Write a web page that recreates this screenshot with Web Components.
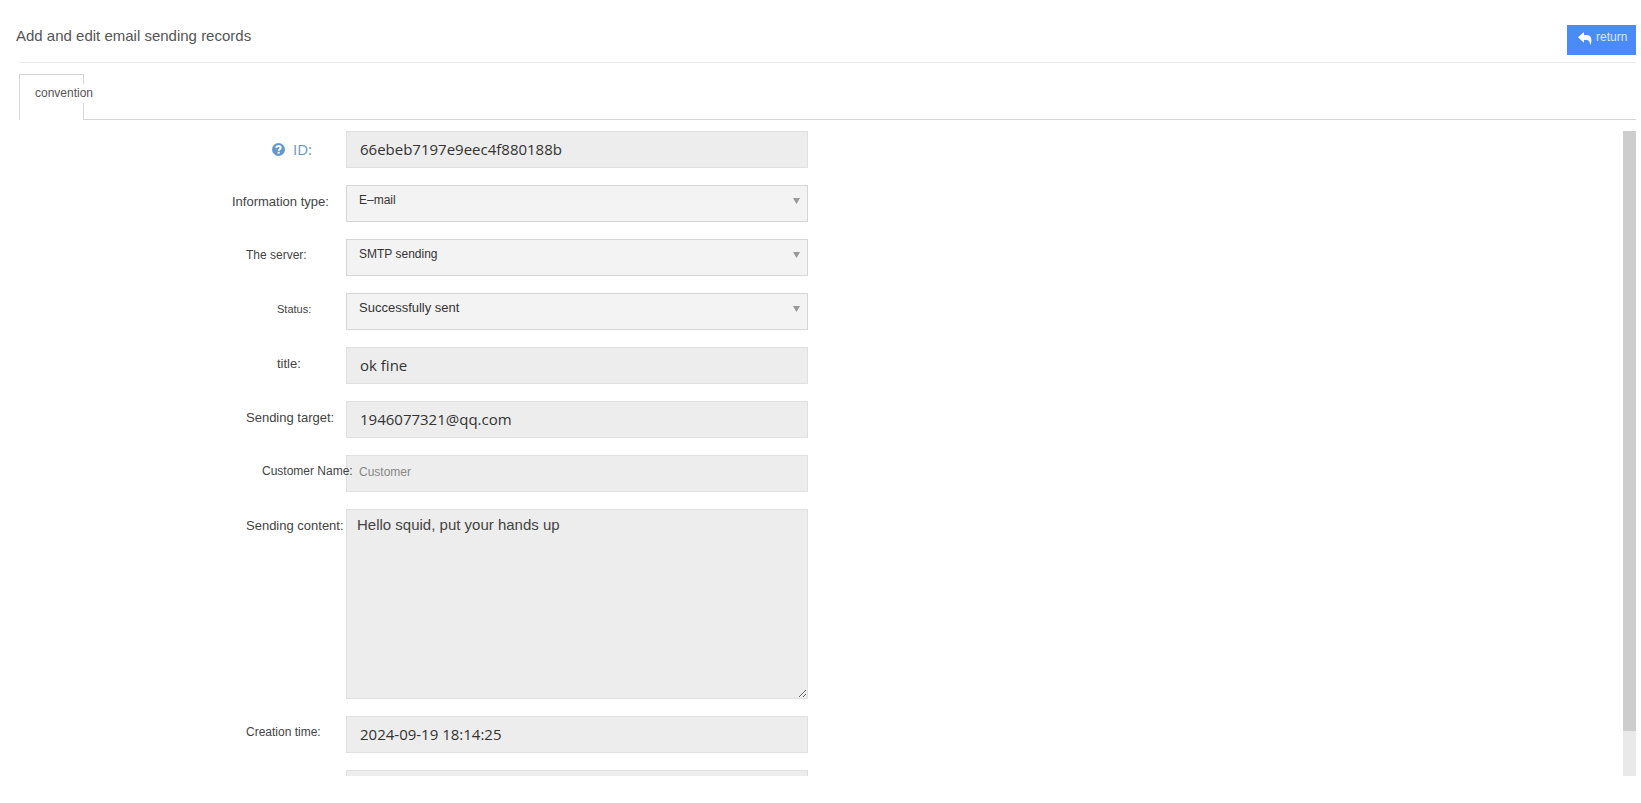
<!DOCTYPE html>
<html lang="en">
<head>
    <meta charset="UTF-8">
    <meta name="viewport" content="width=device-width, initial-scale=1.0">
    <title>Add and edit email sending records</title>
    <style>
        body {
            margin: 0;
            background: #fff;
            color: #444;
            font-family: "Liberation Sans", Arial, sans-serif;
        }
    </style>
</head>
<body>
    <template id="page-tmpl">
        <style>
            :host {
                display: flex;
                flex-direction: column;
                box-sizing: border-box;
                height: 100vh;
                padding: 0 5px 27px 16px;
            }

            header {
                display: flex;
                justify-content: space-between;
                align-items: center;
                height: 62px;
                box-sizing: border-box;
                padding-top: 18px;
            }

            h1 {
                margin: 0;
                padding-bottom: 8px;
                font-size: 15px;
                font-weight: normal;
                line-height: 20px;
                color: #555;
            }

            main {
                display: flex;
                flex-direction: column;
                flex: 1;
                min-height: 0;
                margin-left: 3px;
                border-top: 1px solid #eaebed;
                padding-top: 11px;
            }
        </style>
        <header>
            <h1><slot name="title"></slot></h1>
            <slot name="action"></slot>
        </header>
        <main>
            <slot></slot>
        </main>
    </template>

    <template id="return-tmpl">
        <style>
            :host {
                display: block;
            }

            button {
                display: flex;
                gap: 4px;
                width: 69px;
                height: 30px;
                border: 0;
                padding: 4px 0 0 11px;
                background: #4a8bf7;
                color: #dbe8ff;
                font: 12px/16px "Liberation Sans", Arial, sans-serif;
            }

            svg {
                margin-top: 3px;
                fill: #fff;
            }
        </style>
        <button type="button">
            <svg width="14" height="13" viewBox="0 0 14 13" aria-hidden="true">
                <path d="M0 5.300 5.400.4Q6 0 6 .7V3h2.300c3.300 0 5.100 1.700 5.100 5 0 1.600-.3 3-.9 4.400-.2.400-.5.300-.5-.1-.1-2.700-1.200-4.200-3.700-4.200H6V10q0 .7-.6.300Z"/>
            </svg>
            <slot></slot>
        </button>
    </template>

    <template id="tabs-tmpl">
        <style>
            :host {
                display: block;
                border-bottom: 1px solid #d5d5d5;
            }

            button {
                display: block;
                width: 65px;
                height: 46px;
                margin-bottom: -1px;
                border: 1px solid #d5d5d5;
                border-bottom: 0;
                padding: 0 0 8px 15px;
                background: #fff;
                color: #555;
                font: 12px/19px "Liberation Sans", Arial, sans-serif;
                text-align: left;
                white-space: nowrap;
            }

            /* the caption may run over the tab's right border */
            span {
                display: inline-block;
                background: #fff;
            }
        </style>
        <button type="button" role="tab" aria-selected="true"><span><slot></slot></span></button>
    </template>

    <template id="form-tmpl">
        <style>
            :host {
                display: flex;
                flex: 1;
                min-height: 0;
                margin-top: 11px;
            }

            form {
                display: grid;
                align-content: start;
                flex: 1;
                gap: 17px;
                padding-bottom: 17px;
                overflow-y: auto;
                scrollbar-width: none;
            }

            .track {
                display: flex;
                flex-direction: column;
                width: 13px;
                background: #e9e9e9;
            }

            .thumb {
                flex: 0 0 93%;
                background: #cdcdcd;
            }
        </style>
        <form><slot></slot></form>
        <div class="track"><div class="thumb"></div></div>
    </template>

    <script>
        const cloneInto = (host, tmpl) => {
            host.attachShadow({ mode: 'open' });
            host.shadowRoot.append(tmpl.content.cloneNode(true));
        };

        const byId = id => document.getElementById(id);

        customElements.define('record-page', class extends HTMLElement {
            connectedCallback() {
                cloneInto(this, byId('page-tmpl'));
            }
        });

        customElements.define('return-button', class extends HTMLElement {
            connectedCallback() {
                cloneInto(this, byId('return-tmpl'));
            }
        });

        customElements.define('tab-bar', class extends HTMLElement {
            connectedCallback() {
                cloneInto(this, byId('tabs-tmpl'));
            }
        });

        customElements.define('record-form', class extends HTMLElement {
            connectedCallback() {
                cloneInto(this, byId('form-tmpl'));
                const form = this.shadowRoot.querySelector('form');
                const thumb = this.shadowRoot.querySelector('.thumb');
                form.addEventListener('scroll', () => {
                    thumb.style.marginTop = `${Math.round(form.scrollTop * form.clientHeight / form.scrollHeight)}px`;
                });
            }
        });

        customElements.define('form-row', class extends HTMLElement {
            // attributes: kind (text | select | area), label, value, span, size
            control() {
                const value = this.getAttribute('value') || '';
                const hint = this.getAttribute('placeholder') || '';
                switch (this.getAttribute('kind')) {
                    case 'select':
                        return `<select id="field"><option>${value}</option></select>`;
                    case 'area':
                        return `<textarea id="field" readonly>${value}</textarea>`;
                    default:
                        return `<input id="field" type="text" value="${value}" placeholder="${hint}" readonly>`;
                }
            }

            connectedCallback() {
                this.attachShadow({ mode: 'open' });
                const label = this.getAttribute('label');
                this.shadowRoot.innerHTML = `
                    <style>
                        :host {
                            --label: 82px;
                            --label-size: 13px;
                            --text-size: 13px;
                            display: grid;
                            grid-template-columns: 309px minmax(0, 462px);
                            column-gap: 18px;
                            align-items: start;
                        }

                        :host([span="5"]) { --label: 96px; }
                        :host([span="3"]) { --label: 66px; }
                        :host([span="2"]) { --label: 51px; }
                        :host([size="small"]) { --label-size: 12px; }
                        :host([size="tiny"]) { --label-size: 11px; }
                        :host([text="small"]) { --text-size: 12px; }

                        label {
                            grid-column: 1;
                            z-index: 1;
                            justify-self: end;
                            width: var(--label);
                            font-size: var(--label-size);
                            line-height: 33px;
                            white-space: nowrap;
                        }

                        :host([help]) label {
                            display: flex;
                            align-items: center;
                            gap: 8px;
                            width: 56px;
                            color: #6498c8;
                            font-family: "Open Sans", sans-serif;
                            font-size: 15px;
                            line-height: 37px;
                        }

                        input, select, textarea {
                            grid-column: 2;
                            display: block;
                            box-sizing: border-box;
                            width: 100%;
                            height: 37px;
                            margin: 0;
                            border: 1px solid #e0e0e0;
                            border-radius: 0;
                            padding: 0 13px 2px;
                            background-color: #ededed;
                            color: #333;
                            font-family: "Open Sans", sans-serif;
                            font-size: 15px;
                            outline: 0;
                        }

                        input::placeholder {
                            color: #888;
                            font-family: "Liberation Sans", Arial, sans-serif;
                            font-size: 12px;
                        }

                        :host([placeholder]) input {
                            padding: 0 12px 8px;
                        }

                        select {
                            appearance: none;
                            border-color: #d6d6d6;
                            padding: 0 12px 8px;
                            background: #f3f3f3;
                            font-family: "Liberation Sans", Arial, sans-serif;
                            font-size: var(--text-size);
                        }

                        .arrow {
                            grid-area: 1 / 2;
                            z-index: 1;
                            justify-self: end;
                            margin: 13px 8px 0 0;
                            pointer-events: none;
                        }

                        select, .arrow { grid-row: 1; }

                        textarea {
                            height: 190px;
                            padding: 5px 10px;
                            color: #444;
                            font: 15px/20px "Liberation Sans", Arial, sans-serif;
                            resize: both;
                        }
                    </style>
                    ${label ? `<label for="field">${this.hasAttribute('help') ? `
                        <svg width="13" height="13" viewBox="0 0 13 13" aria-hidden="true">
                            <circle cx="6.5" cy="6.5" r="6.5" fill="#6498c8"/>
                            <path d="M4.200 4.900C4.400 3.600 5.300 3 6.500 3s2.200.7 2.200 1.700c0 1.500-2 1.500-2 3.100" fill="none" stroke="#fff" stroke-width="1.900"/>
                            <path d="M5.600 8.800h2v1.800h-2z" fill="#fff"/>
                        </svg>` : ''}<span>${label}</span></label>` : ''}
                    ${this.control()}
                    ${this.getAttribute('kind') === 'select' ? `
                        <svg class="arrow" width="7" height="6" viewBox="0 0 7 6" aria-hidden="true">
                            <path d="M0 0h7L3.500 6z" fill="#999"/>
                        </svg>` : ''}
                `;
            }
        });
    </script>

    <record-page>
        <span slot="title">Add and edit email sending records</span>
        <return-button slot="action">return</return-button>
        <tab-bar>convention</tab-bar>
        <record-form>
            <form-row help label="ID:" value="66ebeb7197e9eec4f880188b"></form-row>
            <form-row kind="select" span="5" label="Information type:" text="small" value="E–mail"></form-row>
            <form-row kind="select" size="small" label="The server:" text="small" value="SMTP sending"></form-row>
            <form-row kind="select" span="2" size="tiny" label="Status:" value="Successfully sent"></form-row>
            <form-row span="2" label="title:" value="ok fine"></form-row>
            <form-row label="Sending target:" value="1946077321@qq.com"></form-row>
            <form-row span="3" size="small" label="Customer Name:" placeholder="Customer"></form-row>
            <form-row kind="area" label="Sending content:" value="Hello squid, put your hands up"></form-row>
            <form-row size="small" label="Creation time:" value="2024-09-19 18:14:25"></form-row>
            <form-row></form-row>
        </record-form>
    </record-page>
</body>
</html>
